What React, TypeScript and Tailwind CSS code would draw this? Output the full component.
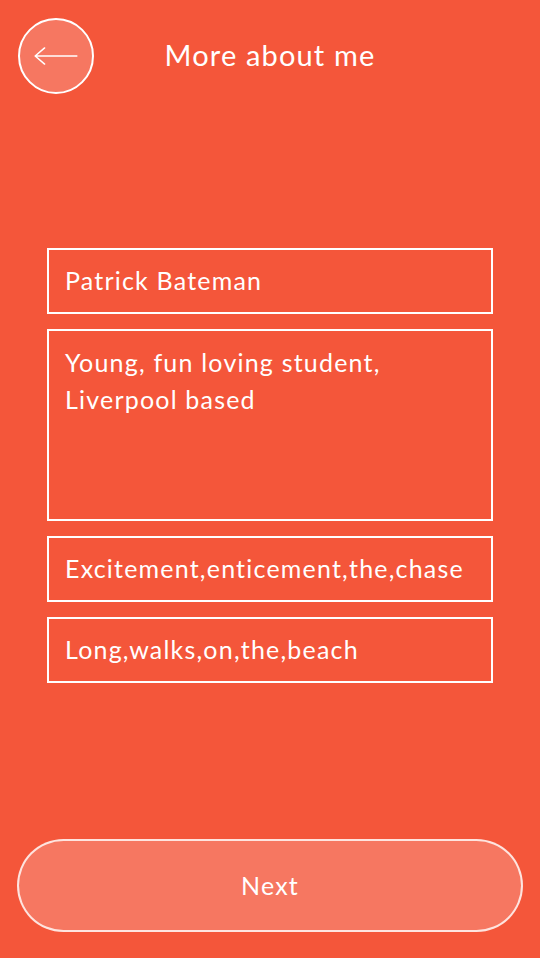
const fields = [
  "Patrick Bateman",
  "Excitement,enticement,the,chase",
  "Long,walks,on,the,beach",
];

const BackArrow = () => (
  <svg width="76" height="76" viewBox="0 0 76 76" fill="none">
    <path
      d="M16 38 H60 M26 29.5 L16 38 L26 46.5"
      stroke="white"
      strokeWidth="1.6"
      strokeLinecap="round"
      strokeLinejoin="round"
    />
  </svg>
);

const Field = ({ children }: { children: string }) => (
  <div className="h-[66px] border-2 border-white flex items-center pl-4 text-[25px] tracking-[0.048em] text-white">
    {children}
  </div>
);

export default function App() {
  return (
    <div
      className="w-[540px] h-[958px] bg-[#f4563a] flex flex-col text-white"
      style={{ fontFamily: "Lato, 'Open Sans', sans-serif" }}
    >
      <header className="grid grid-cols-[76px_1fr_76px] items-center px-[18px] pt-[18px]">
        <button className="w-[76px] h-[76px] rounded-full border-2 border-white bg-white/20 flex items-center justify-center">
          <BackArrow />
        </button>
        <h1 className="text-center text-[29px] tracking-[0.04em] leading-none -mt-[4px]">More about me</h1>
        <div />
      </header>

      <div className="mx-[47px] mt-[154px] flex flex-col gap-[15px]">
        <Field>{fields[0]}</Field>
        <div className="h-[192px] border-2 border-white pl-4 pt-[13px] text-[25px] tracking-[0.048em] leading-[37px]">
          Young, fun loving student,
          <br />
          Liverpool based
        </div>
        <Field>{fields[1]}</Field>
        <Field>{fields[2]}</Field>
      </div>

      <button className="mt-auto mb-[26px] mx-[17px] h-[93px] rounded-full border-2 border-white/80 bg-white/20 text-[25px] tracking-[0.048em] text-white">
        Next
      </button>
    </div>
  );
}
